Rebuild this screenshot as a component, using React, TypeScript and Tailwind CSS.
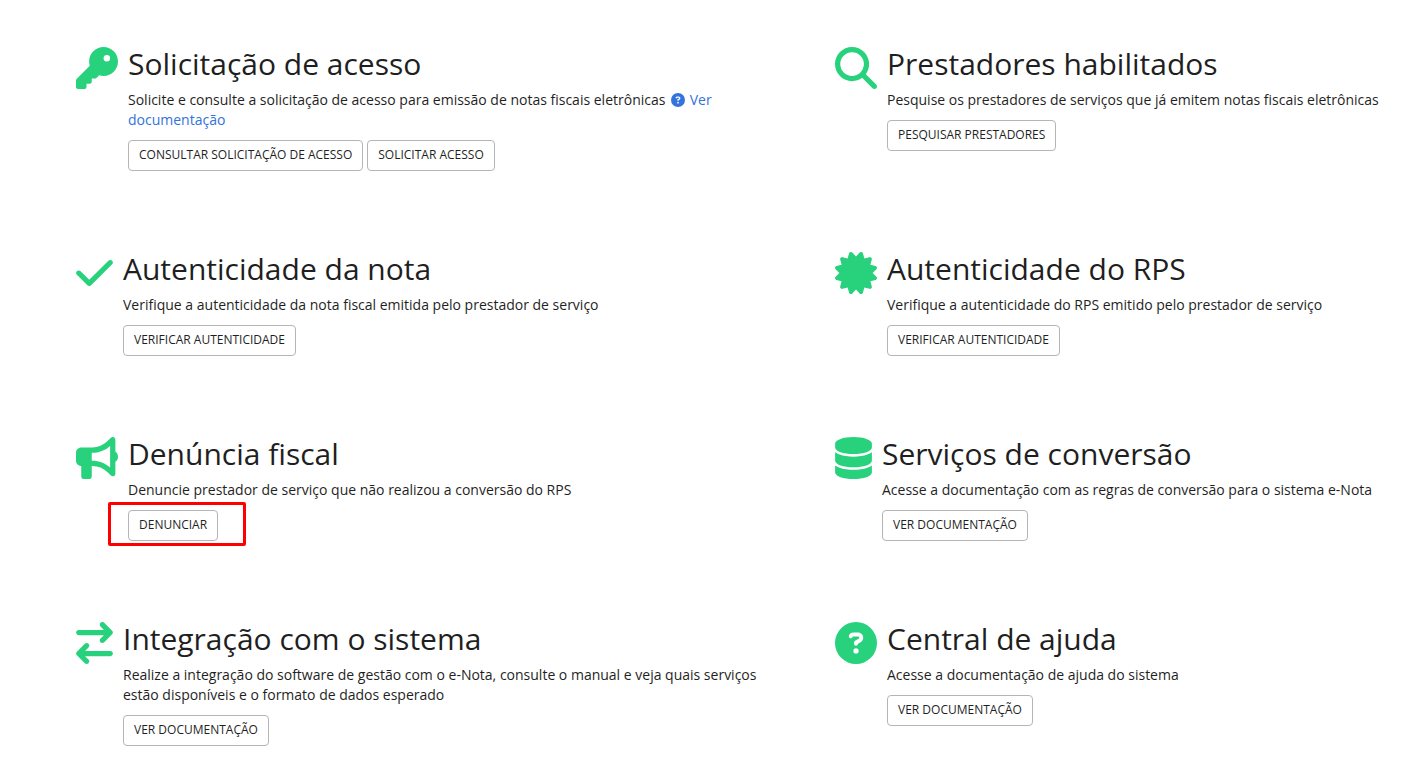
import type { ReactNode } from 'react';
import type { IconType } from 'react-icons';
import {
  FaKey,
  FaMagnifyingGlass,
  FaCertificate,
  FaBullhorn,
  FaDatabase,
  FaCheck,
  FaArrowRightArrowLeft,
  FaCircleQuestion,
} from 'react-icons/fa6';

interface Servico {
  id: string;
  titulo: string;
  descricao: ReactNode;
  icon: IconType;
  // viewBox dos ícones mais estreitos
  viewBox?: string;
  acoes: string[];
  destaque?: boolean;
}

const servicos: Servico[] = [
  {
    id: 'solicitacao',
    titulo: 'Solicitação de acesso',
    descricao: (
      <>
        Solicite e consulte a solicitação de acesso para emissão de notas fiscais eletrônicas{' '}
        <a href="#documentacao" className="text-[#3273dc]">
          <FaCircleQuestion className="mr-px ml-0.5 inline h-3.5 w-3.5 align-[-2px]" /> Ver documentação
        </a>
      </>
    ),
    icon: FaKey,
    acoes: ['Consultar solicitação de acesso', 'Solicitar acesso'],
  },
  {
    id: 'prestadores',
    titulo: 'Prestadores habilitados',
    descricao: 'Pesquise os prestadores de serviços que já emitem notas fiscais eletrônicas',
    icon: FaMagnifyingGlass,
    acoes: ['Pesquisar prestadores'],
  },
  {
    id: 'nota',
    titulo: 'Autenticidade da nota',
    descricao: 'Verifique a autenticidade da nota fiscal emitida pelo prestador de serviço',
    icon: FaCheck,
    viewBox: '0 0 448 512',
    acoes: ['Verificar autenticidade'],
  },
  {
    id: 'rps',
    titulo: 'Autenticidade do RPS',
    descricao: 'Verifique a autenticidade do RPS emitido pelo prestador de serviço',
    icon: FaCertificate,
    acoes: ['Verificar autenticidade'],
  },
  {
    id: 'denuncia',
    titulo: 'Denúncia fiscal',
    descricao: 'Denuncie prestador de serviço que não realizou a conversão do RPS',
    icon: FaBullhorn,
    acoes: ['Denunciar'],
    destaque: true,
  },
  {
    id: 'conversao',
    titulo: 'Serviços de conversão',
    descricao: 'Acesse a documentação com as regras de conversão para o sistema e-Nota',
    icon: FaDatabase,
    viewBox: '0 0 448 512',
    acoes: ['Ver documentação'],
  },
  {
    id: 'integracao',
    titulo: 'Integração com o sistema',
    descricao:
      'Realize a integração do software de gestão com o e-Nota, consulte o manual e veja quais serviços estão disponíveis e o formato de dados esperado',
    icon: FaArrowRightArrowLeft,
    viewBox: '0 0 448 512',
    acoes: ['Ver documentação'],
  },
  {
    id: 'ajuda',
    titulo: 'Central de ajuda',
    descricao: 'Acesse a documentação de ajuda do sistema',
    icon: FaCircleQuestion,
    acoes: ['Ver documentação'],
  },
];

function ServicoCard({ servico }: { servico: Servico }) {
  const Icon = servico.icon;

  return (
    <section className="flex items-start gap-2.5">
      <Icon
        {...(servico.viewBox ? { viewBox: servico.viewBox } : {})}
        className={`mt-1 h-[42px] shrink-0 text-[#28d17c] ${servico.viewBox ? 'w-[37px]' : 'w-[42px]'}`}
      />
      <div className="min-w-0">
        <h2 className="text-3xl leading-[42px]">{servico.titulo}</h2>
        <p className="mt-[5px] text-sm leading-5">{servico.descricao}</p>
        <div className="relative mt-2.5 flex w-fit flex-wrap gap-1">
          {servico.acoes.map((acao) => (
            <button
              key={acao}
              type="button"
              className="h-[31px] cursor-pointer rounded-sm border border-[#b5b5b5] bg-white px-2.5 pb-0.5 text-xs uppercase hover:border-gray-500"
            >
              {acao}
            </button>
          ))}
          {servico.destaque && (
            <span className="pointer-events-none absolute -top-2 -right-7 -bottom-[5px] -left-5 rounded-xs border-3 border-[#ff0000]" />
          )}
        </div>
      </div>
    </section>
  );
}

export default function App() {
  return (
    <main className="min-h-screen bg-white pt-[43px] pr-2 pb-7 pl-[76px] font-['Open_Sans',sans-serif] text-[#1f1f1f]">
      <div className="grid grid-cols-[695fr_565fr] gap-x-16 gap-y-[77px]">
        {servicos.map((servico) => (
          <ServicoCard key={servico.id} servico={servico} />
        ))}
      </div>
    </main>
  );
}
